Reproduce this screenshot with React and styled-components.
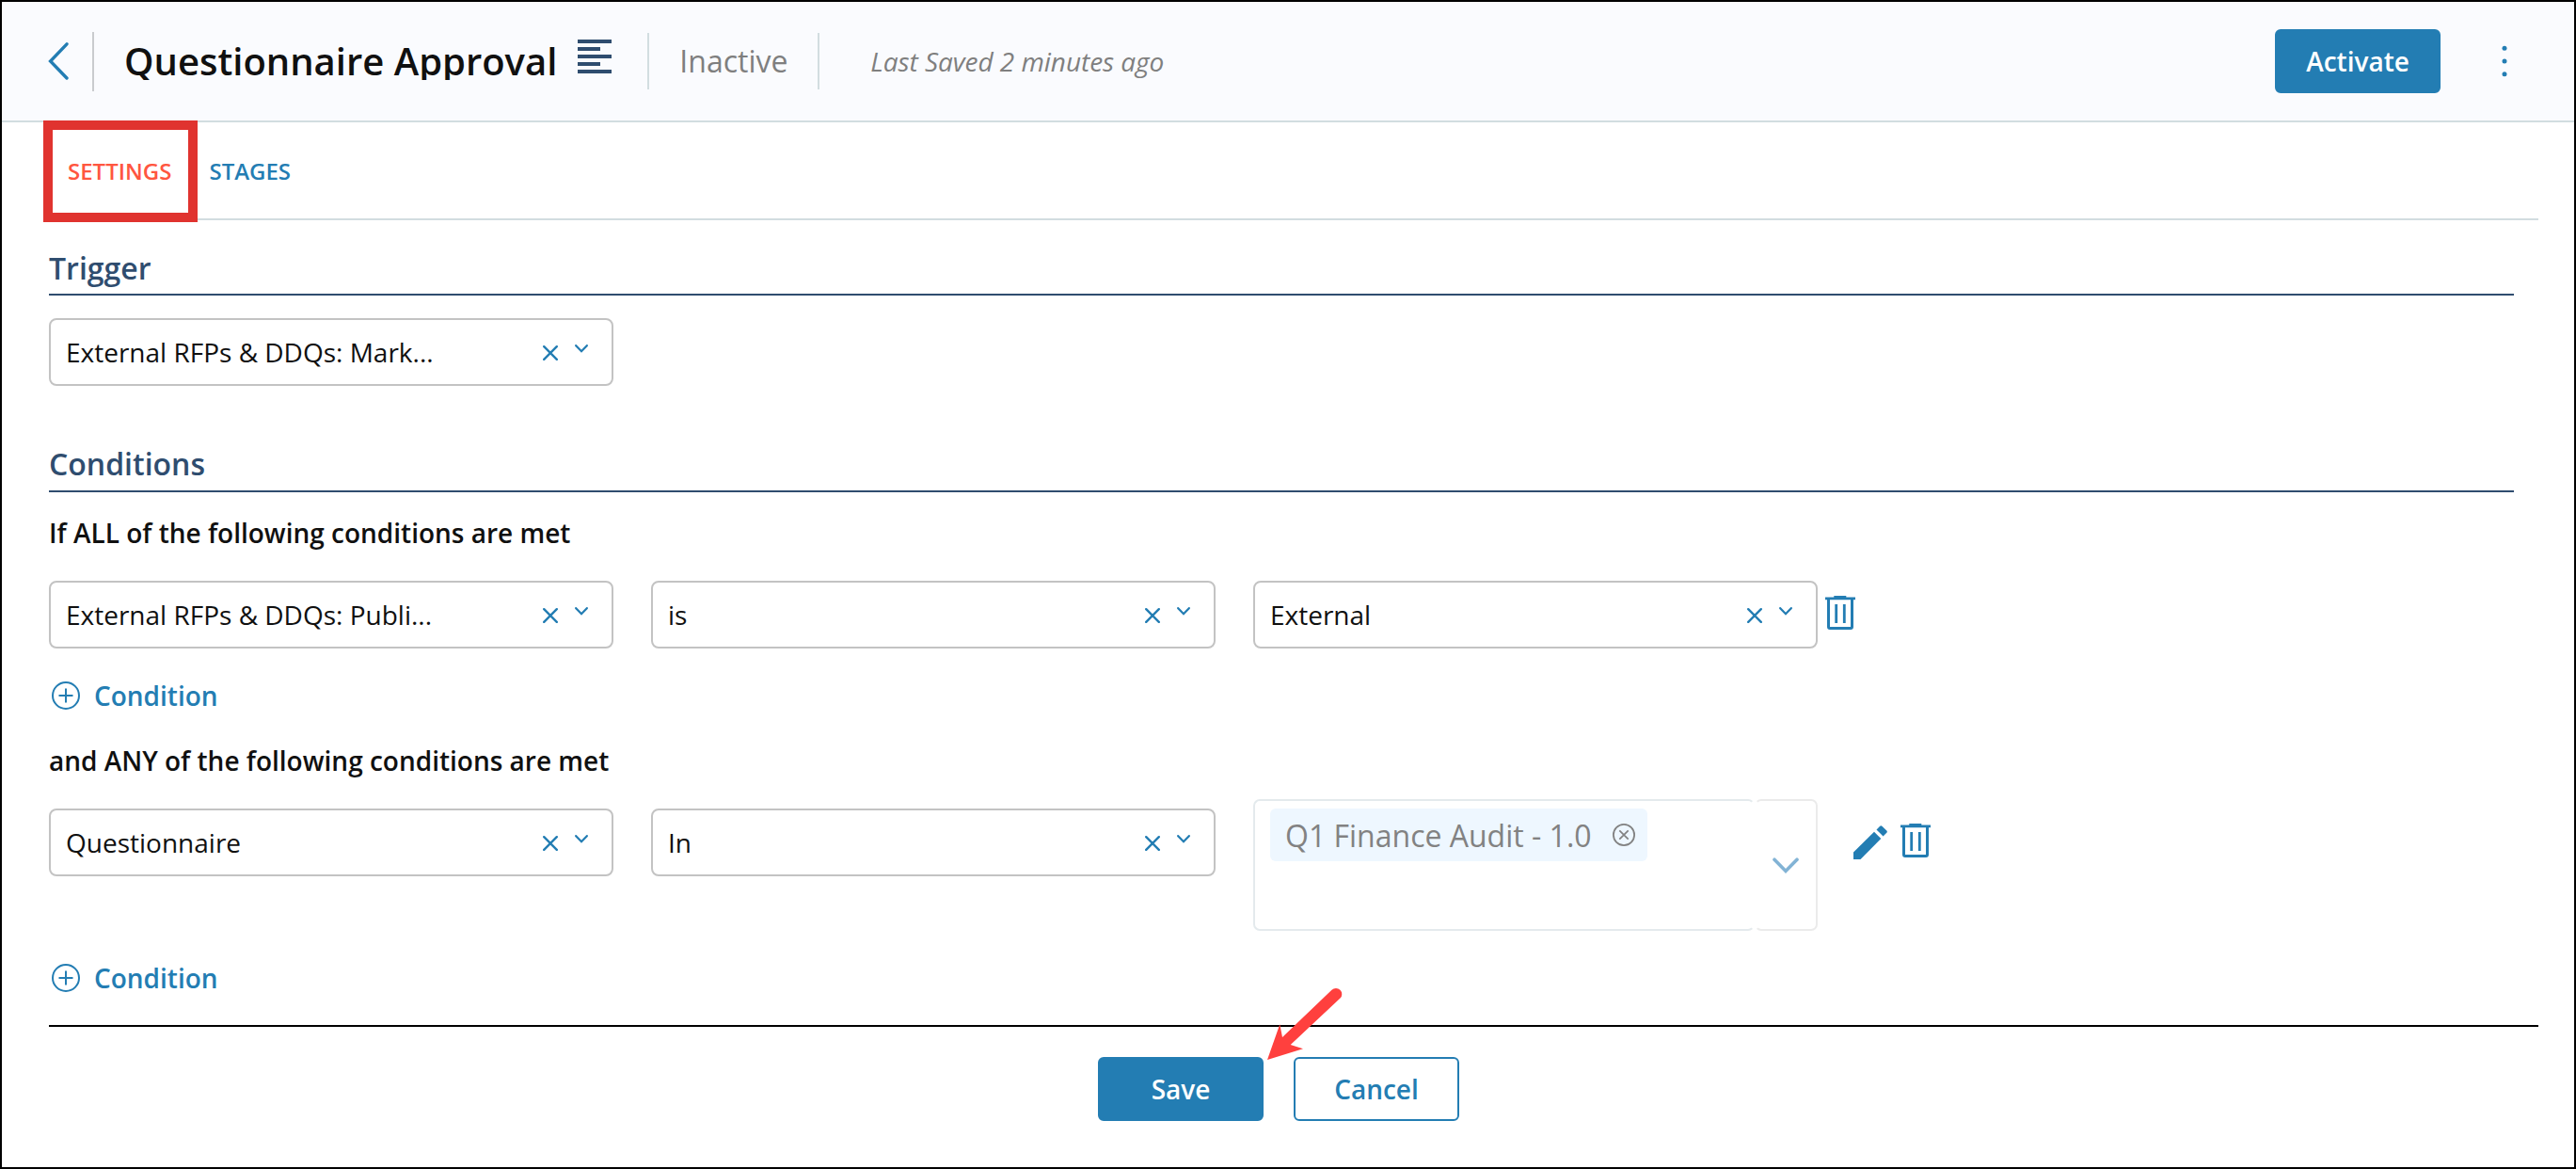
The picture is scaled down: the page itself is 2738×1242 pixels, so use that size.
import React, { memo, useState } from 'react'
import styled, { createGlobalStyle } from 'styled-components'

const BLUE = '#237db3'
const NAVY = '#2f4d6f'
const LINE = '#d2dde0'

//
const CloseIcon = () => (
	<svg width="16" height="16" viewBox="0 0 16 16" fill="none" stroke={BLUE} strokeWidth="2.4">
		<path d="M1.2 1.2L14.8 14.8M14.8 1.2L1.2 14.8" strokeLinecap="round" />
	</svg>
)

const ChevronIcon = () => (
	<svg width="14" height="9" viewBox="0 0 14 9" fill="none" stroke={BLUE} strokeWidth="2.3">
		<path d="M1.2 1.2L7 7.2L12.8 1.2" strokeLinecap="round" />
	</svg>
)

const PlusCircleIcon = () => (
	<svg width="30" height="30" viewBox="0 0 30 30" fill="none" stroke={BLUE} strokeWidth="2">
		<circle cx="15" cy="15" r="14" />
		<path d="M15 7.5V22.5M7.5 15H22.5" />
	</svg>
)

const TrashIcon = () => (
	<svg width="32" height="36" viewBox="0 0 32 36">
		<path d="M9.3 0H22.3V1.4H32V4.3H0V1.4H9.3Z" fill={BLUE} />
		<path
			d="M3.5 4V33Q3.5 34.5 5 34.5H27Q28.5 34.5 28.5 33V4"
			fill="none"
			stroke={BLUE}
			strokeWidth="3"
		/>
		<path d="M11.7 9V29M20.3 9V29" stroke={BLUE} strokeWidth="2.8" />
	</svg>
)

const PencilIcon = () => (
	<svg width="36" height="38" viewBox="0 -2 36 38" fill={BLUE}>
		<path d="M0 28.5L22 6.7L29.3 14L7.5 36H0Z" />
		<path d="M24.5 4.4L28.2 0.7Q29.3 -0.3 30.4 0.7L35.3 5.6Q36.3 6.7 35.3 7.8L31.6 11.5Z" />
	</svg>
)

//
const Select = memo(({ value }) => (
	<SelectBox>
		<SelectValue>{value}</SelectValue>
		<SelectClear>
			<CloseIcon />
		</SelectClear>
		<SelectToggle>
			<ChevronIcon />
		</SelectToggle>
	</SelectBox>
))

//
const MultiSelect = memo(({ values }) => (
	<MultiSelectBox>
		<MultiSelectValues>
			{values.map(v => (
				<Chip key={v}>
					<span>{v}</span>
					<svg width="24" height="24" viewBox="0 0 24 24" fill="none" stroke="#828282">
						<circle cx="12" cy="12" r="11.1" strokeWidth="1.8" />
						<path d="M7.3 7.3L16.7 16.7M16.7 7.3L7.3 16.7" strokeWidth="1.7" />
					</svg>
				</Chip>
			))}
		</MultiSelectValues>
		<MultiSelectToggle>
			<svg width="28" height="17" viewBox="0 0 28 17" fill="none" stroke="#82b3d5">
				<path d="M2 2.2L14 14.4L26 2.2" strokeWidth="3.6" strokeLinecap="round" />
			</svg>
		</MultiSelectToggle>
	</MultiSelectBox>
))

//
const AddCondition = memo(() => (
	<AddButton>
		<PlusCircleIcon />
		<span>Condition</span>
	</AddButton>
))

//
const App = () => {
	const [tab, setTab] = useState('SETTINGS')

	return (
		<Page>
			<GlobalStyle />

			<Header>
				<BackButton aria-label="Back">
					<svg width="24" height="42" viewBox="0 0 24 42" fill="none" stroke={BLUE}>
						<path d="M22 2.8L4.6 21L22 39" strokeWidth="3.4" strokeLinecap="round" />
					</svg>
				</BackButton>
				<Title>Questionnaire Approval</Title>
				<AlignIcon>
					<svg width="36" height="36" viewBox="0 0 36 36" fill={NAVY}>
						<path d="M0 0H36V4H0ZM0 8H24V12H0ZM0 16H36V20H0ZM0 24H24V28H0ZM0 32H36V36H0Z" />
					</svg>
				</AlignIcon>
				<Status>Inactive</Status>
				<LastSaved>Last Saved 2 minutes ago</LastSaved>
				<Button $primary>Activate</Button>
				<MenuButton aria-label="More">
					<svg width="6" height="34" viewBox="0 0 6 34" fill={BLUE}>
						<circle cx="3" cy="3.3" r="2.5" />
						<circle cx="3" cy="17" r="2.5" />
						<circle cx="3" cy="30.7" r="2.5" />
					</svg>
				</MenuButton>
			</Header>

			<Content>
				<Tabs>
					{['SETTINGS', 'STAGES'].map(name => (
						<Tab key={name} $active={tab === name} onClick={() => setTab(name)}>
							{name}
						</Tab>
					))}
					<TabHighlight />
				</Tabs>

				<SectionTitle>Trigger</SectionTitle>
				<Row>
					<Select value="External RFPs &amp; DDQs: Mark..." />
				</Row>

				<SectionTitle $spaced>Conditions</SectionTitle>
				<GroupLabel>If ALL of the following conditions are met</GroupLabel>
				<ConditionRow>
					<Select value="External RFPs &amp; DDQs: Publi..." />
					<Select value="is" />
					<Select value="External" />
					<RowActions>
						<TrashIcon />
					</RowActions>
				</ConditionRow>
				<AddCondition />

				<GroupLabel $spaced>and ANY of the following conditions are met</GroupLabel>
				<ConditionRow $tall>
					<Select value="Questionnaire" />
					<Select value="In" />
					<MultiSelect values={['Q1 Finance Audit - 1.0']} />
					<RowActions $editable>
						<PencilIcon />
						<TrashIcon />
					</RowActions>
				</ConditionRow>
				<AddCondition />

				<Footer>
					<SaveWrapper>
						<Button $primary>Save</Button>
						<Arrow width="84" height="82" viewBox="0 0 84 82">
							<path d="M2 78L15.3 40.3L18 54L70.5 3.8A6.2 6.2 0 0 1 79.5 12.6L26.7 62L40 66.3Z" />
						</Arrow>
					</SaveWrapper>
					<Button>Cancel</Button>
				</Footer>
			</Content>
		</Page>
	)
}

export default App

const GlobalStyle = createGlobalStyle`
	* {
		box-sizing: border-box;
	}

	body {
		margin: 0;
		font-family: 'Open Sans', 'Noto Sans', sans-serif;
		color: #101010;
	}

	button {
		font-family: inherit;
		padding: 0;
		border: none;
		background: none;
		cursor: pointer;
	}

	svg {
		display: block;
		flex: none;
	}
`

const Page = styled.div`
	height: 1242px;
	border: 2px solid #000;
	background: #fff;
	overflow: hidden;
`

const Header = styled.header`
	display: flex;
	align-items: center;
	height: 128px;
	padding: 0 71px 0 47px;
	background: #fafbfe;
	border-bottom: 2px solid ${LINE};
`

const BackButton = styled.button`
	display: flex;
	align-items: center;
	width: 51px;
	height: 63px;
	border-right: 2px solid #c9cbce;
`

/* the line box is tight, so descenders are cut at its bottom edge */
const Title = styled.h1`
	margin: 0 0 0 32px;
	font-size: 40px;
	font-weight: 600;
	line-height: 40px;
	height: 40px;
	overflow: hidden;
	white-space: nowrap;
`

const AlignIcon = styled.div`
	display: flex;
	width: 98px;
	height: 60px;
	padding: 7px 0 0 22px;
	border-right: 2px solid ${LINE};
`

const Status = styled.div`
	width: 181px;
	height: 60px;
	padding-left: 32px;
	border-right: 2px solid ${LINE};
	font-size: 32px;
	line-height: 60px;
	color: #7f7f7f;
`

const LastSaved = styled.div`
	margin: 0 auto 0 54px;
	font-size: 28px;
	font-style: italic;
	letter-spacing: -0.05px;
	color: #7f7f7f;
`

const Button = styled.button`
	width: 176px;
	height: 68px;
	border: 2px solid ${BLUE};
	border-radius: 6px;
	background: ${p => (p.$primary ? BLUE : '#fff')};
	color: ${p => (p.$primary ? '#fff' : BLUE)};
	font-size: 28px;
	font-weight: 600;
`

const MenuButton = styled.button`
	margin-left: 65px;
`

const Content = styled.main`
	padding: 0 38px 0 50px;
`

const Tabs = styled.nav`
	position: relative;
	display: flex;
	align-items: center;
	gap: 40px;
	height: 104px;
	padding-left: 20px;
	border-bottom: 2px solid ${LINE};
`

const Tab = styled.button`
	font-size: 24px;
	font-weight: 600;
	color: ${p => (p.$active ? '#ff5640' : BLUE)};
`

const TabHighlight = styled.div`
	position: absolute;
	top: -2px;
	left: -6px;
	width: 164px;
	height: 108px;
	border: 10px solid #e0332f;
	pointer-events: none;
`

const SectionTitle = styled.h2`
	margin: ${p => (p.$spaced ? '61px' : '29px')} 26px 0 0;
	padding-bottom: ${p => (p.$spaced ? '6px' : '5px')};
	border-bottom: 2px solid ${NAVY};
	font-size: 32px;
	font-weight: 600;
	line-height: 44px;
	color: ${NAVY};
`

const Row = styled.div`
	display: flex;
	margin-top: 24px;
`

const GroupLabel = styled.h3`
	margin: ${p => (p.$spaced ? '35px' : '24px')} 0 0;
	font-size: 28px;
	font-weight: 600;
	line-height: 38px;
`

const ConditionRow = styled.div`
	display: grid;
	grid-template-columns: 600px 600px 600px auto;
	column-gap: 40px;
	justify-content: start;
	align-items: start;
	margin-top: ${p => (p.$tall ? '22px' : '32px')};

	> * {
		margin-top: ${p => (p.$tall ? '10px' : '0')};
	}
`

const SelectBox = styled.div`
	display: flex;
	width: 600px;
	height: 72px;
	padding: 0 25px 0 16px;
	border: 2px solid #c3c3c3;
	border-radius: 8px;
`

const SelectValue = styled.div`
	flex: 1;
	font-size: 28px;
	line-height: 68px;
`

const SelectClear = styled.div`
	padding-top: 27px;
`

const SelectToggle = styled.div`
	padding: 26px 0 0 18px;
`

const MultiSelectBox = styled.div`
	display: grid;
	grid-template-columns: 1fr 67px;
	width: 600px;
	height: 140px;
	margin-top: 0;
`

const MultiSelectValues = styled.div`
	padding: 8px 16px;
	border: 2px solid #e4eaed;
	border-right-color: transparent;
	border-radius: 7px;
`

const MultiSelectToggle = styled.div`
	display: flex;
	justify-content: center;
	padding: 60px 2px 0 0;
	border: 2px solid #ebebeb;
	border-left-color: transparent;
	border-radius: 7px;
`

const Chip = styled.div`
	display: flex;
	align-items: center;
	justify-content: space-between;
	width: 401px;
	height: 56px;
	padding: 0 13px 0 16px;
	border-radius: 6px;
	background: #eef7ff;
	font-size: 32px;
	color: #828282;
`

const RowActions = styled.div`
	display: flex;
	gap: 14px;
	padding-top: 16px;
	margin-left: ${p => (p.$editable ? '-2px' : '-32px')};
`

const AddButton = styled.button`
	display: flex;
	align-items: center;
	gap: 15px;
	height: 30px;
	margin: 35px 0 0 3px;
	color: ${BLUE};
	font-size: 28px;
	font-weight: 600;
	line-height: 30px;
`

const Footer = styled.footer`
	display: flex;
	justify-content: center;
	gap: 32px;
	margin-top: 35px;
	padding: 32px 32px 0 0;
	border-top: 2px solid #000;
`

const SaveWrapper = styled.div`
	position: relative;
`

const Arrow = styled.svg`
	position: absolute;
	left: 178px;
	top: -75px;
	fill: #ff403e;
`
